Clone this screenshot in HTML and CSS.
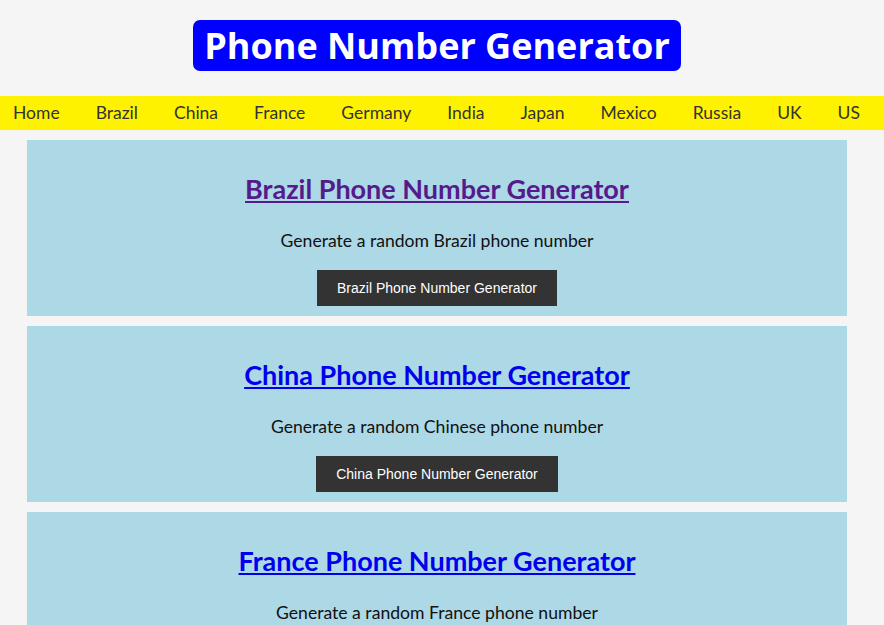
FILE: index.html
```html
<!DOCTYPE html>
<html lang="en">

<head>
    <meta charset="UTF-8">
    <meta name="viewport" content="width=device-width, initial-scale=1.0">
    <title>Phone Number Generator</title>
    <link rel="stylesheet" href="styles.css">
</head>

<body>
    <header class="site-header">
        <h1 class="site-title">Phone Number Generator</h1>
    </header>

    <!-- Country links -->
    <nav class="country-nav">
        <a href="#">Home</a>
        <a href="#brazil">Brazil</a>
        <a href="#china">China</a>
        <a href="#france">France</a>
        <a href="#germany">Germany</a>
        <a href="#india">India</a>
        <a href="#japan">Japan</a>
        <a href="#mexico">Mexico</a>
        <a href="#russia">Russia</a>
        <a href="#uk">UK</a>
        <a href="#us">US</a>
    </nav>

    <main class="generator-list">
        <section class="generator-card" id="brazil">
            <h2><a href="#brazil" class="visited">Brazil Phone Number Generator</a></h2>
            <p>Generate a random Brazil phone number</p>
            <button type="button">Brazil Phone Number Generator</button>
        </section>
        <section class="generator-card" id="china">
            <h2><a href="#china-generator">China Phone Number Generator</a></h2>
            <p>Generate a random Chinese phone number</p>
            <button type="button">China Phone Number Generator</button>
        </section>
        <section class="generator-card" id="france">
            <h2><a href="#france-generator">France Phone Number Generator</a></h2>
            <p>Generate a random France phone number</p>
            <button type="button">France Phone Number Generator</button>
        </section>
        <section class="generator-card" id="germany">
            <h2><a href="#germany-generator">Germany Phone Number Generator</a></h2>
            <p>Generate a random Germany phone number</p>
            <button type="button">Germany Phone Number Generator</button>
        </section>
    </main>
</body>

</html>
```

FILE: styles.css
```css
body {
    font-family: Lato, "Open Sans", sans-serif;
    font-size: 18px;
    background-color: #f5f5f5;
    margin: 0;
    color: #111;
}

.site-header {
    text-align: center;
    padding-top: 20px;
    margin-right: 10px;
}

.site-title {
    display: inline-block;
    margin: 0;
    padding: 2px 11px 1px;
    font-family: "Open Sans", Lato, sans-serif;
    font-size: 36px;
    line-height: 48px;
    color: #fff;
    background-color: #0000ff;
    border-radius: 7px;
}

.country-nav {
    display: flex;
    gap: 36px;
    margin-top: 25px;
    padding: 5px 13px;
    background-color: #fff200;
    font-size: 17.5px;
    line-height: 24px;
}

.country-nav a {
    color: #333;
    text-decoration: none;
}

/* Generator cards */
.generator-list {
    margin-right: 10px;
    padding: 10px 27px 0;
}

.generator-card {
    background-color: #add8e6;
    text-align: center;
    padding: 9px 10px 10px;
    margin-bottom: 10px;
}

.generator-card h2 {
    font-size: 27px;
    line-height: 36px;
    margin: 22px 0;
}

.generator-card h2 a {
    color: #0000ee;
}

.generator-card h2 a.visited {
    color: #551a8b;
}

.generator-card p {
    margin: 0 0 17px;
    font-size: 17.6px;
    line-height: 24px;
}

.generator-card button {
    font-family: "Liberation Sans", Arial, sans-serif;
    font-size: 14px;
    line-height: 18px;
    padding: 9px 20px;
    background-color: #333;
    color: #fff;
    border: none;
    cursor: pointer;
}
```
